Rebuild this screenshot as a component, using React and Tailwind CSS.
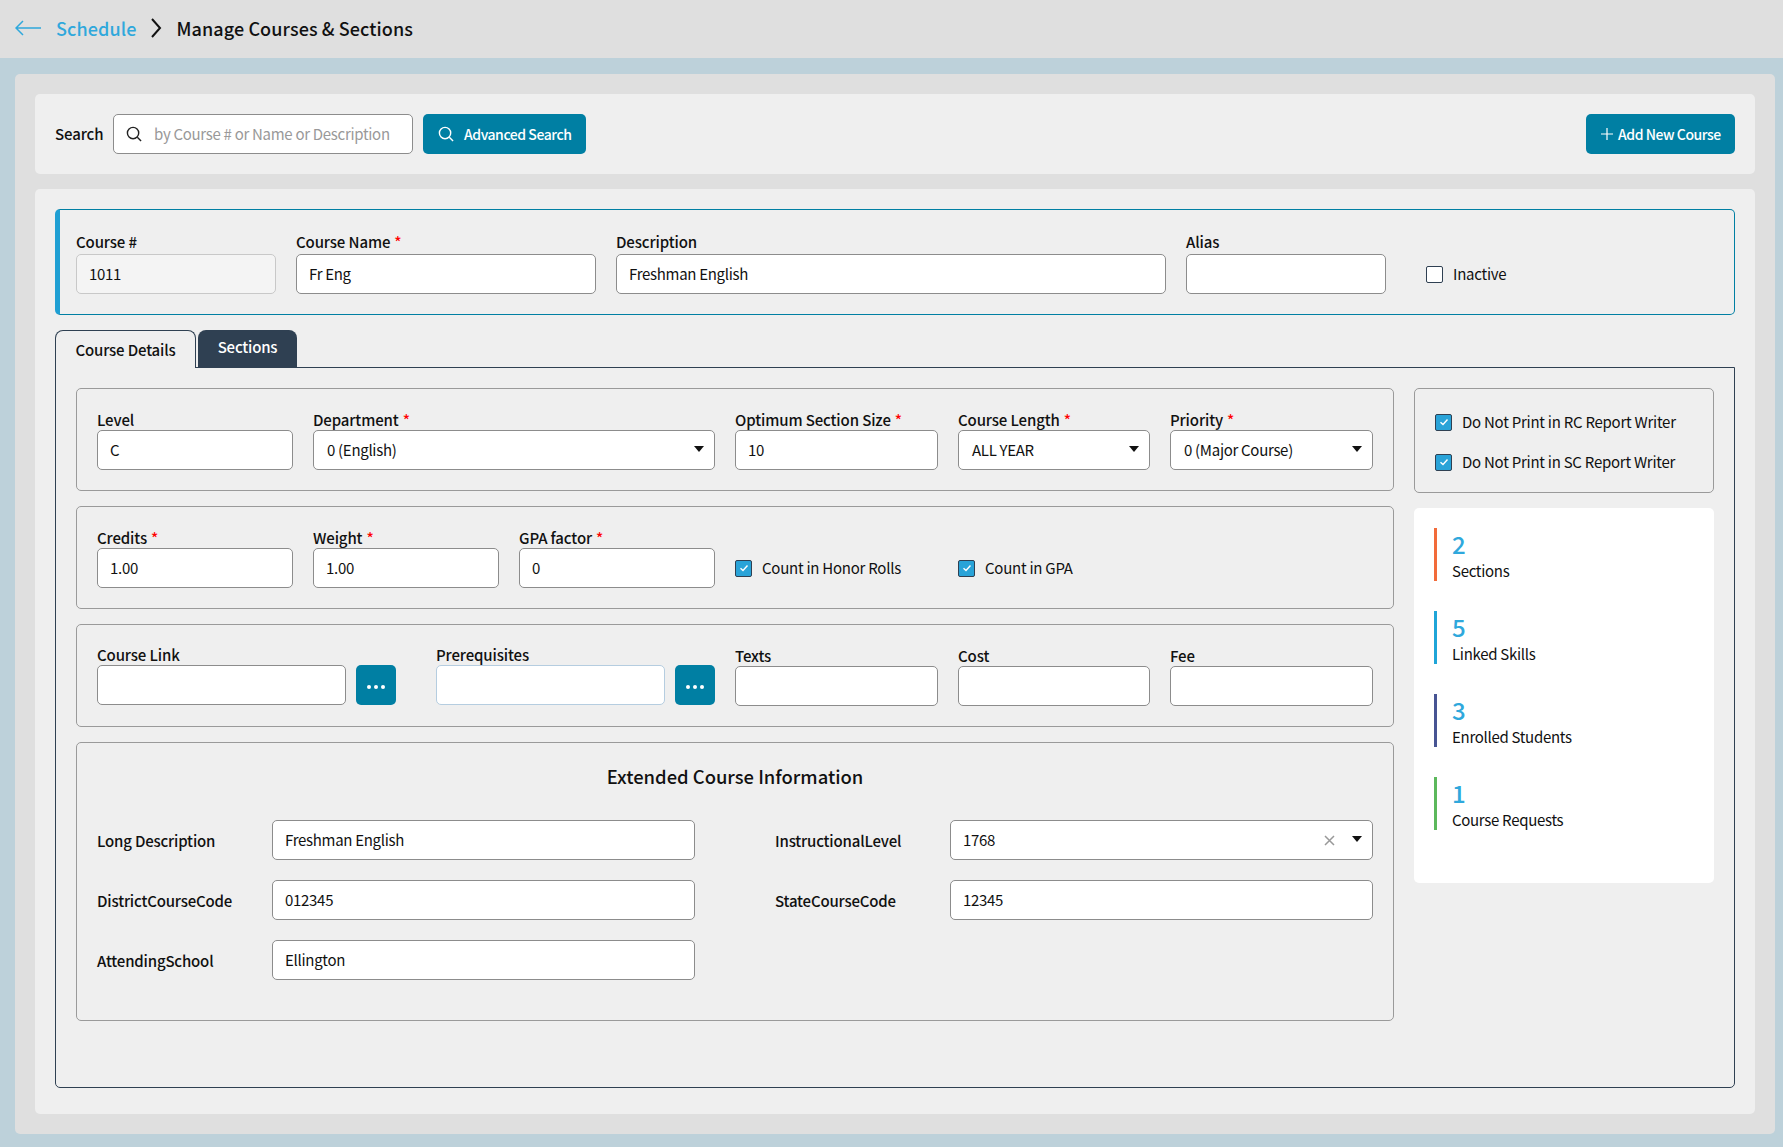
import React from "react";

const inputCls = "block h-10 w-full rounded-[5px] border border-[#8c8c8c] bg-white pl-3 pr-3 pb-[2px] text-[15px] tracking-[-0.3px] text-[#111] outline-none";

function Label({ children, required, className = "" }) {
  return (
    <div className={`h-[21px] whitespace-nowrap text-[15px] font-medium leading-[21px] tracking-[-0.12px] text-[#111] ${className}`}>
      {children}
      {required && <span className="ml-[4px] text-[#f00]">*</span>}
    </div>
  );
}

function Field({ label, required, value = "", className = "", labelClass = "" }) {
  return (
    <div className={className}>
      <Label required={required} className={labelClass}>{label}</Label>
      <input readOnly value={value} className={inputCls} />
    </div>
  );
}

function Caret() {
  return (
    <svg width="10" height="6" viewBox="0 0 10 6" className="-mt-[3px] shrink-0">
      <path d="M0 0h10L5 6z" fill="#111" />
    </svg>
  );
}

function SelectField({ label, required, value, className = "" }) {
  return (
    <div className={className}>
      <Label required={required}>{label}</Label>
      <div className="flex h-10 items-center justify-between rounded-[5px] border border-[#8c8c8c] bg-white pl-[13px] pr-[10px] text-[15px] tracking-[-0.3px] text-[#111]">
        <span>{value}</span>
        <Caret />
      </div>
    </div>
  );
}

function Check({ checked }) {
  return (
    <span className={`flex h-[17px] w-[17px] shrink-0 items-center justify-center rounded-[2px] border border-[#2f4052] ${checked ? "bg-[#29a3d8]" : "bg-white"}`}>
      {checked && (
        <svg width="10" height="8" viewBox="0 0 10 8" fill="none">
          <path d="M1.5 4.2 4 6.5 8.5 1.5" stroke="#fff" strokeWidth="1.4" />
        </svg>
      )}
    </span>
  );
}

function CheckLabel({ checked, children, className = "" }) {
  return (
    <div className={`flex items-center gap-[10px] text-[15px] tracking-[-0.25px] text-[#111] ${className}`}>
      <Check checked={checked} />
      <span className="whitespace-nowrap">{children}</span>
    </div>
  );
}

function Dots() {
  return (
    <button className="flex h-10 w-10 shrink-0 items-center justify-center gap-[3px] rounded-[5px] bg-[#007fa3] pt-[4px]">
      <span className="h-[4px] w-[4px] rounded-full bg-white" />
      <span className="h-[4px] w-[4px] rounded-full bg-white" />
      <span className="h-[4px] w-[4px] rounded-full bg-white" />
    </button>
  );
}

function SearchIcon({ color, size = 17 }) {
  return (
    <svg width={size} height={size} viewBox="0 0 17 17" fill="none" stroke={color} strokeWidth="1.5" className="shrink-0">
      <circle cx="7.5" cy="7.5" r="6" />
      <path d="M12 12l4 4" />
    </svg>
  );
}

function Fieldset({ children, className = "" }) {
  return <div className={`rounded-[5px] border border-[#9a9a9a] ${className}`}>{children}</div>;
}

function Stat({ value, label, color }) {
  return (
    <div className={`flex h-[53px] flex-col border-l-[3px] pl-[15px] ${color}`}>
      <div className="h-[32px] text-[24px] font-medium leading-[32px] text-[#2fa8dc]">{value}</div>
      <div className="text-[15px] leading-[21px] tracking-[-0.3px] text-[#111]">{label}</div>
    </div>
  );
}

function ExtLabel({ children }) {
  return <div className="w-[175px] shrink-0 pt-[2px] text-[15px] font-medium tracking-[-0.18px] text-[#111]">{children}</div>;
}

function ExtRow({ label, value }) {
  return (
    <div className="flex items-center">
      <ExtLabel>{label}</ExtLabel>
      <input readOnly value={value} className={inputCls} />
    </div>
  );
}

export default function App() {
  return (
    <div className="min-h-[1147px] bg-[#bdd1da] font-['Noto_Sans_CJK_JP',sans-serif]">
      <header className="flex h-[58px] items-center bg-[#dfdfdf] pb-[2px] pl-[15px] text-[18px] font-medium tracking-[0.1px]">
        <svg width="26" height="16" viewBox="0 0 26 16" fill="none" stroke="#2fa8dc" strokeWidth="1.5">
          <path d="M8 1 1 8l7 7M1 8h25" />
        </svg>
        <span className="ml-[15px] text-[#2fa8dc]">Schedule</span>
        <svg width="12" height="20" viewBox="0 0 12 20" fill="none" stroke="#111" strokeWidth="2" className="ml-[14px]">
          <path d="M2 1l8 9-8 9" />
        </svg>
        <span className="ml-[14px] text-[#111]">Manage Courses &amp; Sections</span>
      </header>

      <main className="pl-[15px] pr-2 pt-4">
        <div className="flex flex-col gap-[15px] rounded-[5px] bg-[#dfdfdf] p-5">
          <section className="flex items-center rounded-[5px] bg-[#efefef] p-5">
            <span className="w-[58px] shrink-0 text-[15px] font-medium tracking-[-0.1px] text-[#111]">Search</span>
            <div className="flex h-10 w-[300px] items-center rounded-[5px] border border-[#8c8c8c] bg-white pl-3">
              <SearchIcon color="#222" size={16} />
              <input readOnly placeholder="by Course # or Name or Description" className="ml-3 w-full bg-transparent text-[15px] tracking-[-0.3px] outline-none placeholder:text-[#999]" />
            </div>
            <button className="ml-[10px] flex h-10 w-[163px] items-center rounded-[5px] bg-[#007fa3] pl-[15px] text-[14px] font-medium tracking-[-0.45px] text-white">
              <SearchIcon color="#fff" size={16} />
              <span className="ml-[10px]">Advanced Search</span>
            </button>
            <button className="ml-auto flex h-10 w-[149px] items-center rounded-[5px] bg-[#007fa3] pl-[15px] text-[14px] font-medium tracking-[-0.45px] text-white">
              <svg width="12" height="12" viewBox="0 0 12 12" stroke="#fff" strokeWidth="1.2"><path d="M6 0v12M0 6h12" /></svg>
              <span className="ml-[5px]">Add New Course</span>
            </button>
          </section>

          <section className="rounded-[5px] bg-[#efefef] px-5 pt-5 pb-[26px]">
            <div className="flex items-end gap-5 rounded-[5px] border border-[#007fa3] border-l-[5px] border-l-[#1f9fd3] pl-4 pt-[21px] pb-5">
              <div className="w-[200px]">
                <Label className="mb-[2px]">Course #</Label>
                <input readOnly value="1011" className="block h-10 w-full rounded-[5px] border border-[#c8c8c8] bg-[#f4f4f4] px-3 pb-[2px] text-[15px] tracking-[-0.3px] text-[#111] outline-none" />
              </div>
              <Field label="Course Name" required value="Fr Eng" labelClass="mb-[2px]" className="w-[300px]" />
              <Field label="Description" value="Freshman English" labelClass="mb-[2px]" className="w-[550px]" />
              <Field label="Alias" labelClass="mb-[2px]" className="w-[200px]" />
              <CheckLabel className="ml-5 h-10">Inactive</CheckLabel>
            </div>

            <div className="relative z-10 mt-[15px] flex items-start gap-[2px]">
              <div className="box-border flex h-[38px] w-[141px] items-center justify-center rounded-t-lg border border-b-0 border-[#2f4052] bg-[#efefef] pt-[1px] text-[15px] font-medium tracking-[-0.15px] text-[#111]">
                Course Details
              </div>
              <div className="flex h-[37px] w-[99px] items-center justify-center rounded-t-lg bg-[#2f4052] pb-[3px] text-[15px] font-medium tracking-[-0.2px] text-white">
                Sections
              </div>
            </div>

            <div className="-mt-px flex gap-5 rounded-b-[5px] border border-[#2f4052] px-5 pt-5 pb-[66px]">
              <div className="flex w-[1318px] shrink-0 flex-col gap-[15px]">
                <Fieldset className="flex gap-5 p-5">
                  <Field label="Level" value="C" className="w-[196px]" />
                  <SelectField label="Department" required value="0 (English)" className="w-[402px]" />
                  <Field label="Optimum Section Size" required value="10" className="w-[203px]" />
                  <SelectField label="Course Length" required value="ALL YEAR" className="w-[192px]" />
                  <SelectField label="Priority" required value="0 (Major Course)" className="w-[203px]" />
                </Fieldset>

                <Fieldset className="flex items-end p-5">
                  <Field label="Credits" required value="1.00" className="w-[196px]" />
                  <Field label="Weight" required value="1.00" className="ml-5 w-[186px]" />
                  <Field label="GPA factor" required value="0" className="ml-5 w-[196px]" />
                  <CheckLabel checked className="ml-5 h-10 w-[223px]">Count in Honor Rolls</CheckLabel>
                  <CheckLabel checked className="h-10">Count in GPA</CheckLabel>
                </Fieldset>

                <Fieldset className="flex p-5">
                  <div className="-mt-px w-[299px]">
                    <Label>Course Link</Label>
                    <div className="flex gap-[10px]">
                      <input readOnly className={inputCls} />
                      <Dots />
                    </div>
                  </div>
                  <div className="-mt-px ml-10 w-[279px]">
                    <Label>Prerequisites</Label>
                    <div className="flex gap-[10px]">
                      <input readOnly className="block h-10 w-full rounded-[5px] border border-[#b5cde0] bg-white outline-none" />
                      <Dots />
                    </div>
                  </div>
                  <Field label="Texts" className="ml-5 w-[203px]" />
                  <Field label="Cost" className="ml-5 w-[192px]" />
                  <Field label="Fee" className="ml-5 w-[203px]" />
                </Fieldset>

                <Fieldset className="px-5 pt-[17px] pb-10">
                  <h2 className="mb-[28px] h-[32px] text-center text-[18.4px] font-medium leading-[32px] text-[#111]">
                    Extended Course Information
                  </h2>
                  <div className="grid grid-cols-2 gap-x-20 gap-y-5">
                    <ExtRow label="Long Description" value="Freshman English" />
                    <div className="flex items-center">
                      <ExtLabel>InstructionalLevel</ExtLabel>
                      <div className="flex h-10 w-full items-center rounded-[5px] border border-[#8c8c8c] bg-white pl-3 pr-[10px] text-[15px] tracking-[-0.3px] text-[#111]">
                        <span>1768</span>
                        <svg width="11" height="11" viewBox="0 0 11 11" stroke="#999" strokeWidth="1.5" className="ml-auto mr-[17px]">
                          <path d="M1 1l9 9M10 1l-9 9" />
                        </svg>
                        <Caret />
                      </div>
                    </div>
                    <ExtRow label="DistrictCourseCode" value="012345" />
                    <ExtRow label="StateCourseCode" value="12345" />
                    <ExtRow label="AttendingSchool" value="Ellington" />
                  </div>
                </Fieldset>
              </div>

              <aside className="flex w-[300px] flex-col gap-[15px]">
                <Fieldset className="flex h-[105px] flex-col gap-[18px] pl-5 pt-[22px]">
                  <CheckLabel checked className="h-[22px] tracking-[-0.18px]">Do Not Print in RC Report Writer</CheckLabel>
                  <CheckLabel checked className="h-[22px] tracking-[-0.18px]">Do Not Print in SC Report Writer</CheckLabel>
                </Fieldset>
                <div className="flex h-[375px] flex-col gap-[30px] rounded-[5px] bg-white p-5">
                  <Stat value="2" label="Sections" color="border-l-[#f26b3a]" />
                  <Stat value="5" label="Linked Skills" color="border-l-[#1fa5d8]" />
                  <Stat value="3" label="Enrolled Students" color="border-l-[#475493]" />
                  <Stat value="1" label="Course Requests" color="border-l-[#5cb85c]" />
                </div>
              </aside>
            </div>
          </section>
        </div>
      </main>
    </div>
  );
}
